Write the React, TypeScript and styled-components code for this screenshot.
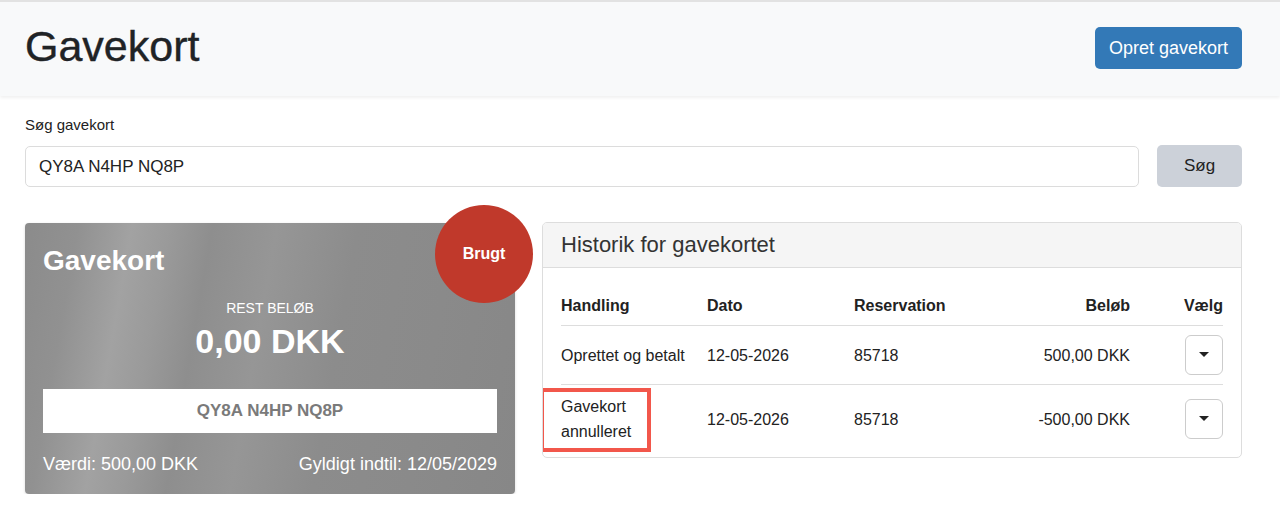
import * as React from 'react';
import styled, { createGlobalStyle } from 'styled-components';

const GlobalStyle = createGlobalStyle`
  body {
    margin: 0;
    background: #fff;
    font-family: "Liberation Sans", Arial, sans-serif;
    color: #212529;
  }
`;

const TopBar = styled.header`
  height: 94px;
  border-top: 2px solid #e2e2e2;
  background: #f8f9fa;
  box-shadow: 0 2px 3px rgba(0, 0, 0, 0.06);
  display: flex;
  align-items: center;
  justify-content: space-between;
  padding: 0 38px 0 25px;
`;

const PageTitle = styled.h1`
  margin: -6px 0 0;
  font-size: 43px;
  font-weight: 400;
  line-height: 1;
  color: #1f2326;
  -webkit-text-stroke: 0.4px #1f2326;
`;

const PrimaryButton = styled.button`
  height: 42px;
  width: 147px;
  margin-top: -2px;
  border: none;
  border-radius: 5px;
  background: #3379b7;
  color: #fff;
  font-family: inherit;
  font-size: 18px;
  cursor: pointer;
`;

const Main = styled.main`
  padding: 20px 38px 0 25px;
`;

const Label = styled.label`
  display: block;
  font-size: 15px;
  line-height: 18px;
  color: #222;
`;

const SearchRow = styled.div`
  display: flex;
  align-items: center;
  gap: 18px;
  margin-top: 10px;
`;

const SearchInput = styled.input`
  flex: 1;
  height: 41px;
  box-sizing: border-box;
  border: 1px solid #dcdcdc;
  border-radius: 5px;
  padding: 0 13px;
  font-family: inherit;
  font-size: 17px;
  color: #222;
  margin-top: 2px;
  outline: none;
`;

const SecondaryButton = styled.button`
  width: 85px;
  height: 42px;
  border: none;
  border-radius: 5px;
  background: #ccd1d9;
  color: #222;
  font-family: inherit;
  font-size: 17px;
  cursor: pointer;
`;

const Content = styled.div`
  display: flex;
  align-items: flex-start;
  gap: 27px;
  margin-top: 35px;
`;

const GiftCard = styled.section`
  position: relative;
  width: 490px;
  height: 271px;
  box-sizing: border-box;
  padding: 21px 18px 19px;
  margin-top: 1px;
  border-radius: 4px;
  color: #fff;
  background: linear-gradient(
    100deg,
    #8b8b8b 0%,
    #919191 10%,
    #a2a2a2 20%,
    #9a9a9a 27%,
    #8e8e8e 35%,
    #969696 47%,
    #8c8c8c 62%,
    #8a8a8a 80%,
    #878787 100%
  );
  box-shadow: 0 1px 3px rgba(0, 0, 0, 0.15);
`;

const CardTitle = styled.div`
  font-size: 28px;
  font-weight: 700;
  line-height: 34px;
`;

const Badge = styled.div`
  position: absolute;
  left: 410px;
  top: -18px;
  width: 98px;
  height: 98px;
  border-radius: 50%;
  background: #c0392b;
  display: flex;
  align-items: center;
  justify-content: center;
  font-size: 16px;
  font-weight: 700;
  color: #fff;
`;

const RestLabel = styled.div`
  margin-top: 22px;
  text-align: center;
  font-size: 14px;
  line-height: 16px;
`;

const Amount = styled.div`
  margin-top: 6px;
  text-align: center;
  font-size: 34px;
  font-weight: 700;
  line-height: 38px;
`;

const CodeBox = styled.div`
  margin-top: 29px;
  height: 44px;
  background: #fff;
  display: flex;
  align-items: center;
  justify-content: center;
  font-size: 17px;
  font-weight: 700;
  color: #7a7a7a;
`;

const CardFooter = styled.div`
  margin-top: 20px;
  display: flex;
  justify-content: space-between;
  font-size: 18px;
  line-height: 22px;
`;

const Panel = styled.section`
  width: 700px;
  box-sizing: border-box;
  border: 1px solid #dddddd;
  border-radius: 5px;
  overflow: hidden;
`;

const PanelHeader = styled.div`
  height: 45px;
  box-sizing: border-box;
  background: #f5f5f5;
  border-bottom: 1px solid #dddddd;
  padding: 0 18px;
  display: flex;
  align-items: center;
  font-size: 22px;
  color: #333;
`;

const PanelBody = styled.div`
  padding: 18px 18px 4px;
`;

const Table = styled.table`
  width: 100%;
  border-collapse: collapse;
  table-layout: fixed;
  font-size: 16px;
  color: #222;
`;

const Th = styled.th<{ $align?: 'left' | 'right' }>`
  height: 39px;
  padding: 0;
  text-align: ${(p) => p.$align ?? 'left'};
  font-weight: 700;
  vertical-align: middle;
  border-bottom: 1px solid #dddddd;
`;

const Tr = styled.tr`
  & + & td {
    border-top: 1px solid #dddddd;
  }
`;

const Td = styled.td<{ $align?: 'left' | 'right' }>`
  position: relative;
  padding: 9px 0;
  line-height: 25px;
  text-align: ${(p) => p.$align ?? 'left'};
  vertical-align: middle;
`;

const Highlight = styled.span`
  position: absolute;
  left: -21px;
  top: 3px;
  width: 111px;
  height: 64px;
  box-sizing: border-box;
  border: 4px solid #f2574b;
  pointer-events: none;
`;

const SelectButton = styled.button`
  width: 38px;
  height: 40px;
  border: 1px solid #cccccc;
  border-radius: 6px;
  background: #fff;
  display: inline-flex;
  align-items: center;
  justify-content: center;
  padding: 0;
  cursor: pointer;
  vertical-align: middle;
`;

const Caret = styled.span`
  width: 0;
  height: 0;
  margin-top: -2px;
  border-left: 5px solid transparent;
  border-right: 5px solid transparent;
  border-top: 5px solid #222;
`;

const rows = [
  { action: 'Oprettet og betalt', date: '12-05-2026', reservation: '85718', amount: '500,00 DKK', marked: false },
  { action: 'Gavekort\nannulleret', date: '12-05-2026', reservation: '85718', amount: '-500,00 DKK', marked: true },
];

export default function App() {
  return (
    <>
      <GlobalStyle />
      <TopBar>
        <PageTitle>Gavekort</PageTitle>
        <PrimaryButton>Opret gavekort</PrimaryButton>
      </TopBar>
      <Main>
        <Label htmlFor="search">Søg gavekort</Label>
        <SearchRow>
          <SearchInput id="search" defaultValue="QY8A N4HP NQ8P" />
          <SecondaryButton>Søg</SecondaryButton>
        </SearchRow>
        <Content>
          <GiftCard>
            <CardTitle>Gavekort</CardTitle>
            <Badge>Brugt</Badge>
            <RestLabel>REST BELØB</RestLabel>
            <Amount>0,00 DKK</Amount>
            <CodeBox>QY8A N4HP NQ8P</CodeBox>
            <CardFooter>
              <span>Værdi: 500,00 DKK</span>
              <span>Gyldigt indtil: 12/05/2029</span>
            </CardFooter>
          </GiftCard>
          <Panel>
            <PanelHeader>Historik for gavekortet</PanelHeader>
            <PanelBody>
              <Table>
                <colgroup>
                  <col style={{ width: 146 }} />
                  <col style={{ width: 147 }} />
                  <col style={{ width: 126 }} />
                  <col style={{ width: 150 }} />
                  <col style={{ width: 93 }} />
                </colgroup>
                <thead>
                  <tr>
                    <Th>Handling</Th>
                    <Th>Dato</Th>
                    <Th>Reservation</Th>
                    <Th $align="right">Beløb</Th>
                    <Th $align="right">Vælg</Th>
                  </tr>
                </thead>
                <tbody>
                  {rows.map((r, i) => (
                    <Tr key={i}>
                      <Td>
                        {r.action.split('\n').map((line, j) => (
                          <div key={j}>{line}</div>
                        ))}
                        {r.marked && <Highlight />}
                      </Td>
                      <Td>{r.date}</Td>
                      <Td>{r.reservation}</Td>
                      <Td $align="right">{r.amount}</Td>
                      <Td $align="right">
                        <SelectButton aria-label="Vælg">
                          <Caret />
                        </SelectButton>
                      </Td>
                    </Tr>
                  ))}
                </tbody>
              </Table>
            </PanelBody>
          </Panel>
        </Content>
      </Main>
    </>
  );
}
